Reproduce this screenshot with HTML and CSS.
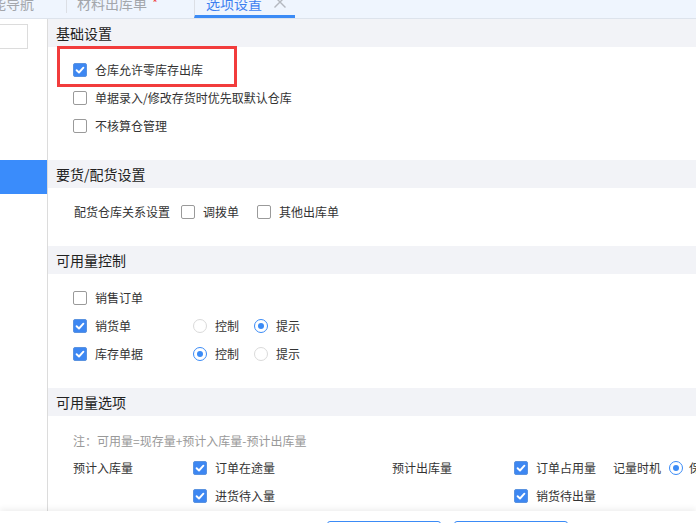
FILE: index.html
```html
<!DOCTYPE html>
<html lang="zh-CN">
<head>
<meta charset="utf-8">
<title>选项设置</title>
<link rel="stylesheet" href="styles.css">
</head>
<body>
<div class="page">
  <div class="tabbar">
    <div class="tab tab-first"><span class="tab-text">功能导航</span></div>
    <div class="tab tab-mid"><span class="tab-text">材料出库单</span><span class="star">*</span></div>
    <div class="tab tab-active"><span class="tab-text">选项设置</span>
      <svg class="close" width="14" height="14" viewBox="0 0 14 14"><path d="M1.5 1.5 L12.5 12.5 M12.5 1.5 L1.5 12.5" stroke="#b4b8bf" stroke-width="1.4" fill="none"/></svg>
    </div>
  </div>
  <div class="main">
    <aside class="side">
      <div class="search"></div>
      <div class="side-item"></div>
    </aside>
    <div class="content">
      <section class="sec">
        <div class="sec-head">基础设置</div>
        <div class="sec-body first">
          <div class="highlight"></div>
          <div class="row"><span class="cb on"><svg width="14" height="14" viewBox="0 0 14 14"><path d="M3.6 7.2 L6 9.5 L10.4 4.7" stroke="#fff" stroke-width="1.9" fill="none" stroke-linecap="round" stroke-linejoin="round"/></svg></span><span class="lbl">仓库允许零库存出库</span></div>
          <div class="row"><span class="cb"></span><span class="lbl">单据录入/修改存货时优先取默认仓库</span></div>
          <div class="row"><span class="cb"></span><span class="lbl">不核算仓管理</span></div>
        </div>
      </section>
      <section class="sec">
        <div class="sec-head">要货/配货设置</div>
        <div class="sec-body">
          <div class="row row-inline">
            <span class="lbl field">配货仓库关系设置</span>
            <span class="cb"></span><span class="lbl opt">调拨单</span>
            <span class="cb"></span><span class="lbl">其他出库单</span>
          </div>
        </div>
      </section>
      <section class="sec">
        <div class="sec-head">可用量控制</div>
        <div class="sec-body">
          <div class="row"><span class="cell-main"><span class="cb"></span><span class="lbl">销售订单</span></span></div>
          <div class="row"><span class="cell-main"><span class="cb on"><svg width="14" height="14" viewBox="0 0 14 14"><path d="M3.6 7.2 L6 9.5 L10.4 4.7" stroke="#fff" stroke-width="1.9" fill="none" stroke-linecap="round" stroke-linejoin="round"/></svg></span><span class="lbl">销货单</span></span>
            <span class="rd"></span><span class="lbl ropt">控制</span><span class="rd on"></span><span class="lbl">提示</span></div>
          <div class="row"><span class="cell-main"><span class="cb on"><svg width="14" height="14" viewBox="0 0 14 14"><path d="M3.6 7.2 L6 9.5 L10.4 4.7" stroke="#fff" stroke-width="1.9" fill="none" stroke-linecap="round" stroke-linejoin="round"/></svg></span><span class="lbl">库存单据</span></span>
            <span class="rd on"></span><span class="lbl ropt">控制</span><span class="rd"></span><span class="lbl">提示</span></div>
        </div>
      </section>
      <section class="sec">
        <div class="sec-head">可用量选项</div>
        <div class="sec-body">
          <div class="row note">注：可用量=现存量+预计入库量-预计出库量</div>
          <div class="qty-grid">
            <span class="lbl">预计入库量</span>
            <span class="opt-cell"><span class="cb on"><svg width="14" height="14" viewBox="0 0 14 14"><path d="M3.6 7.2 L6 9.5 L10.4 4.7" stroke="#fff" stroke-width="1.9" fill="none" stroke-linecap="round" stroke-linejoin="round"/></svg></span><span class="lbl">订单在途量</span></span>
            <span class="lbl">预计出库量</span>
            <span class="opt-cell"><span class="cb on"><svg width="14" height="14" viewBox="0 0 14 14"><path d="M3.6 7.2 L6 9.5 L10.4 4.7" stroke="#fff" stroke-width="1.9" fill="none" stroke-linecap="round" stroke-linejoin="round"/></svg></span><span class="lbl">订单占用量</span></span>
            <span class="opt-cell"><span class="lbl timing">记量时机</span><span class="rd on"></span><span class="lbl">保存时</span></span>
            <span></span>
            <span class="opt-cell"><span class="cb on"><svg width="14" height="14" viewBox="0 0 14 14"><path d="M3.6 7.2 L6 9.5 L10.4 4.7" stroke="#fff" stroke-width="1.9" fill="none" stroke-linecap="round" stroke-linejoin="round"/></svg></span><span class="lbl">进货待入量</span></span>
            <span></span>
            <span class="opt-cell"><span class="cb on"><svg width="14" height="14" viewBox="0 0 14 14"><path d="M3.6 7.2 L6 9.5 L10.4 4.7" stroke="#fff" stroke-width="1.9" fill="none" stroke-linecap="round" stroke-linejoin="round"/></svg></span><span class="lbl">销货待出量</span></span>
            <span></span>
          </div>
        </div>
      </section>
    </div>
  </div>
  <footer class="footer">
    <button class="btn">保存</button>
    <button class="btn">取消</button>
  </footer>
</div>
</body>
</html>
```

FILE: styles.css
```css
* { box-sizing: border-box; }
html, body { margin: 0; padding: 0; background: #fff; }
body {
  font-family: "Noto Sans CJK SC", "Noto Sans", sans-serif;
  color: #333;
}
.page {
  width: 696px;
  height: 523px;
  overflow: hidden;
  display: flex;
  flex-direction: column;
}

/* tabs */
.tabbar {
  flex: 0 0 19px;
  height: 19px;
  background: #eff5fe;
  border-bottom: 1px solid #dde3ec;
  display: flex;
  align-items: flex-start;
  overflow: hidden;
  white-space: nowrap;
}
.tab {
  height: 18px;
  display: flex;
  align-items: flex-start;
  font-size: 14px;
  line-height: 12px;
  color: #a3a6ab;
  overflow: hidden;
}
.tab-text { margin-top: -3px; }
.tab-first { width: 66px; }
.tab-first .tab-text { margin-left: -22px; }
.tab-mid {
  width: 128px;
  padding-left: 10px;
  border-left: 1px solid #dcdfe5;
  height: 13px;
  overflow: visible;
}
.star { color: #f04646; font-size: 13px; margin-left: 5px; margin-top: -3px; }
.tab-active {
  width: 101px;
  padding-left: 11px;
  border-left: 1px solid #dcdfe5;
  border-bottom: 3px solid #3b8bf6;
  color: #3d7ff0;
  overflow: visible;
}
.close { margin-left: 11px; margin-top: -5px; flex: 0 0 14px; }

/* main */
.main {
  flex: 0 0 492px;
  display: flex;
  overflow: hidden;
}
.side {
  width: 48px;
  flex: 0 0 48px;
  border-right: 1px solid #dcdcdc;
  display: flex;
  flex-direction: column;
}
.search {
  margin-top: 5px;
  margin-left: -10px;
  width: 38px;
  height: 25px;
  border: 1px solid #dcdcdc;
  background: #fff;
}
.side-item {
  margin-top: 111px;
  height: 34px;
  background: #3a8cfb;
}
.content {
  flex: 1;
  min-width: 0;
  overflow: hidden;
  white-space: nowrap;
}
.sec-head {
  height: 28px;
  line-height: 28px;
  padding-left: 8px;
  background: #f2f3f7;
  font-size: 14px;
  color: #222;
}
.sec-body {
  position: relative;
  padding: 10px 0 20px 25px;
}
.sec-body.first { padding-top: 9px; }
.highlight {
  position: absolute;
  left: 9px;
  top: -1px;
  width: 180px;
  height: 41px;
  border: 3px solid #f23c3c;
}
.row {
  height: 28px;
  display: flex;
  align-items: center;
  font-size: 12px;
}
.row-inline { padding-left: 1px; }
.lbl { font-size: 12px; color: #333; line-height: 16px; }
.field { margin-right: 11px; }
.opt { margin-right: 18px; }
.cb {
  width: 14px;
  height: 14px;
  flex: 0 0 14px;
  border: 1px solid #9a9a9a;
  border-radius: 2px;
  background: #fff;
  margin-right: 8px;
  display: flex;
  align-items: center;
  justify-content: center;
}
.cb.on {
  background: #3d87f2;
  border-color: #5b93e0;
}
.cb.on svg { flex: 0 0 14px; }
.cell-main {
  width: 120px;
  flex: 0 0 120px;
  display: flex;
  align-items: center;
}
.rd {
  width: 14px;
  height: 14px;
  flex: 0 0 14px;
  border: 1px solid #dadada;
  border-radius: 50%;
  background: #fff;
  margin-right: 8px;
  display: flex;
  align-items: center;
  justify-content: center;
}
.rd.on { border-color: #3b8bf6; }
.rd.on::after {
  content: "";
  width: 6px;
  height: 6px;
  border-radius: 50%;
  background: #3b8bf6;
}
.ropt { margin-right: 15px; }
.note .lbl, .note { color: #999; }
.qty-grid {
  display: grid;
  grid-template-columns: 120px 199px 122px 99px auto;
  grid-auto-rows: 28px;
  align-items: center;
}
.opt-cell { display: flex; align-items: center; }
.timing { margin-right: 8px; }
.opt-cell .rd { margin-right: 6px; }

/* footer */
.footer {
  position: relative;
  z-index: 1;
  flex: 0 0 40px;
  background: #fff;
  box-shadow: 0 -2px 6px rgba(0, 0, 0, 0.07);
  padding: 10px 0 0 327px;
  display: flex;
  gap: 13px;
}
.btn {
  width: 114px;
  height: 28px;
  border: 1px solid #3b8bf6;
  border-radius: 3px;
  background: #fff;
  color: #3b8bf6;
  font-family: inherit;
  font-size: 12px;
}
```
